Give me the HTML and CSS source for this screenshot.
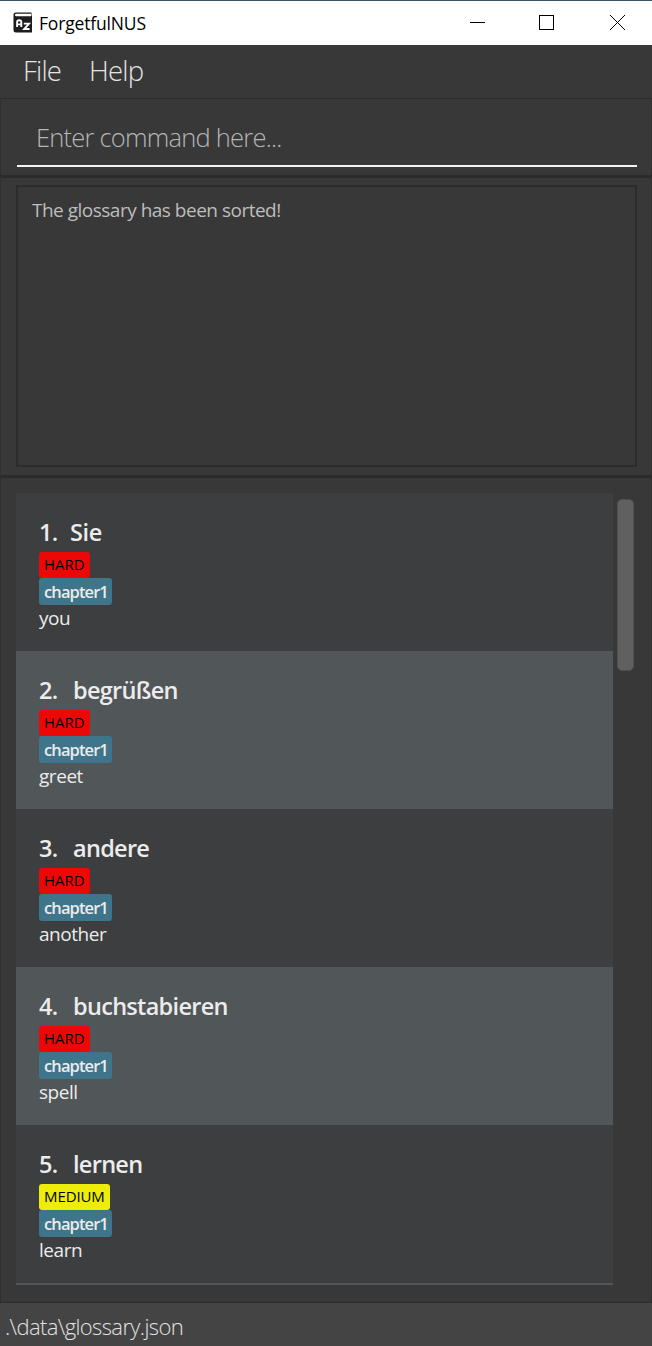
FILE: index.html
```html
<!DOCTYPE html>
<html lang="en">
<head>
<meta charset="utf-8">
<title>ForgetfulNUS</title>
<link rel="stylesheet" href="styles.css">
</head>
<body>
<div class="window">
  <header class="titlebar">
    <svg class="app-icon" width="20" height="22" viewBox="0 0 20 22">
      <path d="M3 0.5H18.5V3.8H19V20.5H3Q0.5 20.5 0.5 18V3Q0.5 0.5 3 0.5Z" fill="#1d1d1f"/>
      <path d="M3.2 1.8H18V4.3H3.2Q2 4.2 2 3Q2 1.9 3.2 1.8Z" fill="#fff"/>
      <path d="M4.1 15V10.2Q4.1 8.2 6.2 8.2T8.3 10.2V15M4.1 12.4H8.3M10.8 11.6H16L11.2 17H16.6" fill="none" stroke="#fff" stroke-width="1.9"/>
    </svg>
    <span class="app-name">ForgetfulNUS</span>
    <svg class="controls" width="160" height="20" viewBox="0 0 160 20" fill="none" stroke="#000" shape-rendering="crispEdges">
      <path d="M2 10.5H17M71.5 3.5H85.5V17.5H71.5Z"/>
      <path d="M142 3L157 18M157 3L142 18" shape-rendering="auto"/>
    </svg>
  </header>
  <nav class="menu"><span class="menu-file">File</span><span class="menu-help">Help</span></nav>
  <section class="command"><div class="command-input"><span>Enter command here...</span></div></section>
  <section class="result"><div class="result-box"><span>The glossary has been sorted!</span></div></section>
  <main class="list-pane">
    <div class="list">
      <article class="entry">
        <h2><span class="number">1.</span><span class="word sie">Sie</span></h2>
        <div class="tag hard"><span>HARD</span></div>
        <div class="tag chapter"><span>chapter1</span></div>
        <p>you</p>
      </article>
      <article class="entry">
        <h2><span class="number">2.</span><span class="word">begrüßen</span></h2>
        <div class="tag hard"><span>HARD</span></div>
        <div class="tag chapter"><span>chapter1</span></div>
        <p>greet</p>
      </article>
      <article class="entry">
        <h2><span class="number">3.</span><span class="word">andere</span></h2>
        <div class="tag hard"><span>HARD</span></div>
        <div class="tag chapter"><span>chapter1</span></div>
        <p>another</p>
      </article>
      <article class="entry">
        <h2><span class="number">4.</span><span class="word">buchstabieren</span></h2>
        <div class="tag hard"><span>HARD</span></div>
        <div class="tag chapter"><span>chapter1</span></div>
        <p>spell</p>
      </article>
      <article class="entry">
        <h2><span class="number">5.</span><span class="word">lernen</span></h2>
        <div class="tag medium"><span>MEDIUM</span></div>
        <div class="tag chapter"><span>chapter1</span></div>
        <p>learn</p>
      </article>
      <div class="entry-edge"></div>
    </div>
    <div class="scrollbar"><div class="thumb"></div></div>
  </main>
  <footer class="status"><span>.\data\glossary.json</span></footer>
</div>
</body>
</html>
```
FILE: styles.css
```css
* { box-sizing: border-box; }
body { margin: 0; font-family: "Open Sans", "Noto Sans", sans-serif; background: #383838; }
.window { width: 652px; height: 1346px; display: flex; flex-direction: column; overflow: hidden; white-space: nowrap; }
.window > * { flex-shrink: 0; }

.titlebar { height: 45px; border-top: 1px solid #3a5563; background: #fff; display: flex; align-items: center; padding-left: 13px; }
.app-icon { margin-bottom: 1px; }
.app-name { margin-left: 6px; margin-bottom: 1px; font-size: 17.5px; letter-spacing: -0.17px; color: #000; }
.controls { margin-left: auto; margin-right: 24px; margin-bottom: 2px; }

.menu { height: 53px; padding: 0 0 2px 23px; display: flex; align-items: center; font-size: 27.5px; font-weight: 300; color: #e4e4e4; letter-spacing: -0.8px; }
.menu-file { width: 66px; }

.command { height: 77px; padding: 12px 14px 0 16px; border: 1px solid #303030; border-top: 1px solid #2b2b2b; border-bottom: 0; }
.command-input { height: 56px; border-bottom: 2px solid #f4f4f4; padding: 0 0 3px 19px; display: flex; align-items: center; font-size: 25.5px; font-weight: 300; color: #b5b5b5; letter-spacing: -0.78px; }

.result { height: 300px; padding: 7px 14px 0 15px; border: 1px solid #303030; border-top: 3px solid #2b2b2b; border-bottom: 0; }
.result-box { height: 282px; border: 2px solid #2c2c2c; padding: 9px 14px; font-size: 19px; line-height: 28px; color: #bdbdbd; letter-spacing: -0.5px; }

.list-pane { height: 827px; padding: 15px 17px 0 15px; border: 1px solid #303030; border-top: 3px solid #2b2b2b; border-bottom: 0; display: flex; gap: 4px; }
.list { width: 597px; height: 792px; }
.entry { height: 158px; padding: 24px 23px 0; background: #3c3e3f; color: #ececec; display: flex; flex-direction: column; align-items: flex-start; }
.entry:nth-child(even) { background: #515658; }
.entry h2 { margin: 0; height: 35px; line-height: 31px; display: flex; font-size: 23.5px; font-weight: 600; letter-spacing: -0.7px; }
.number { width: 34px; }
.sie { margin-left: -3px; letter-spacing: -0.4px; }
.tag { height: 26px; border-radius: 3px; padding-left: 5px; display: flex; align-items: center; }
.hard, .medium { color: #000; font-size: 15px; letter-spacing: 0; padding-bottom: 2px; }
.hard { width: 51px; background: #ed0808; }
.medium { width: 71px; background: #eded08; letter-spacing: -0.1px; }
.chapter { width: 73px; height: 27px; background: #3e758a; font-size: 16.5px; font-weight: 600; letter-spacing: -0.9px; }
.entry p { margin: 0; line-height: 26px; font-size: 19px; letter-spacing: -0.45px; }
.entry-edge { height: 2px; background: #515658; }
.scrollbar { padding-top: 6px; }
.thumb { width: 17px; height: 172px; border-radius: 5px; border: 1px solid #505050; background: #606060; }

.status { height: 44px; border-top: 1px solid #2b2b2b; background: #444; padding: 2px 0 0 5px; display: flex; align-items: center; font-size: 22px; font-weight: 300; color: #e2e2e2; letter-spacing: -0.62px; }
```
